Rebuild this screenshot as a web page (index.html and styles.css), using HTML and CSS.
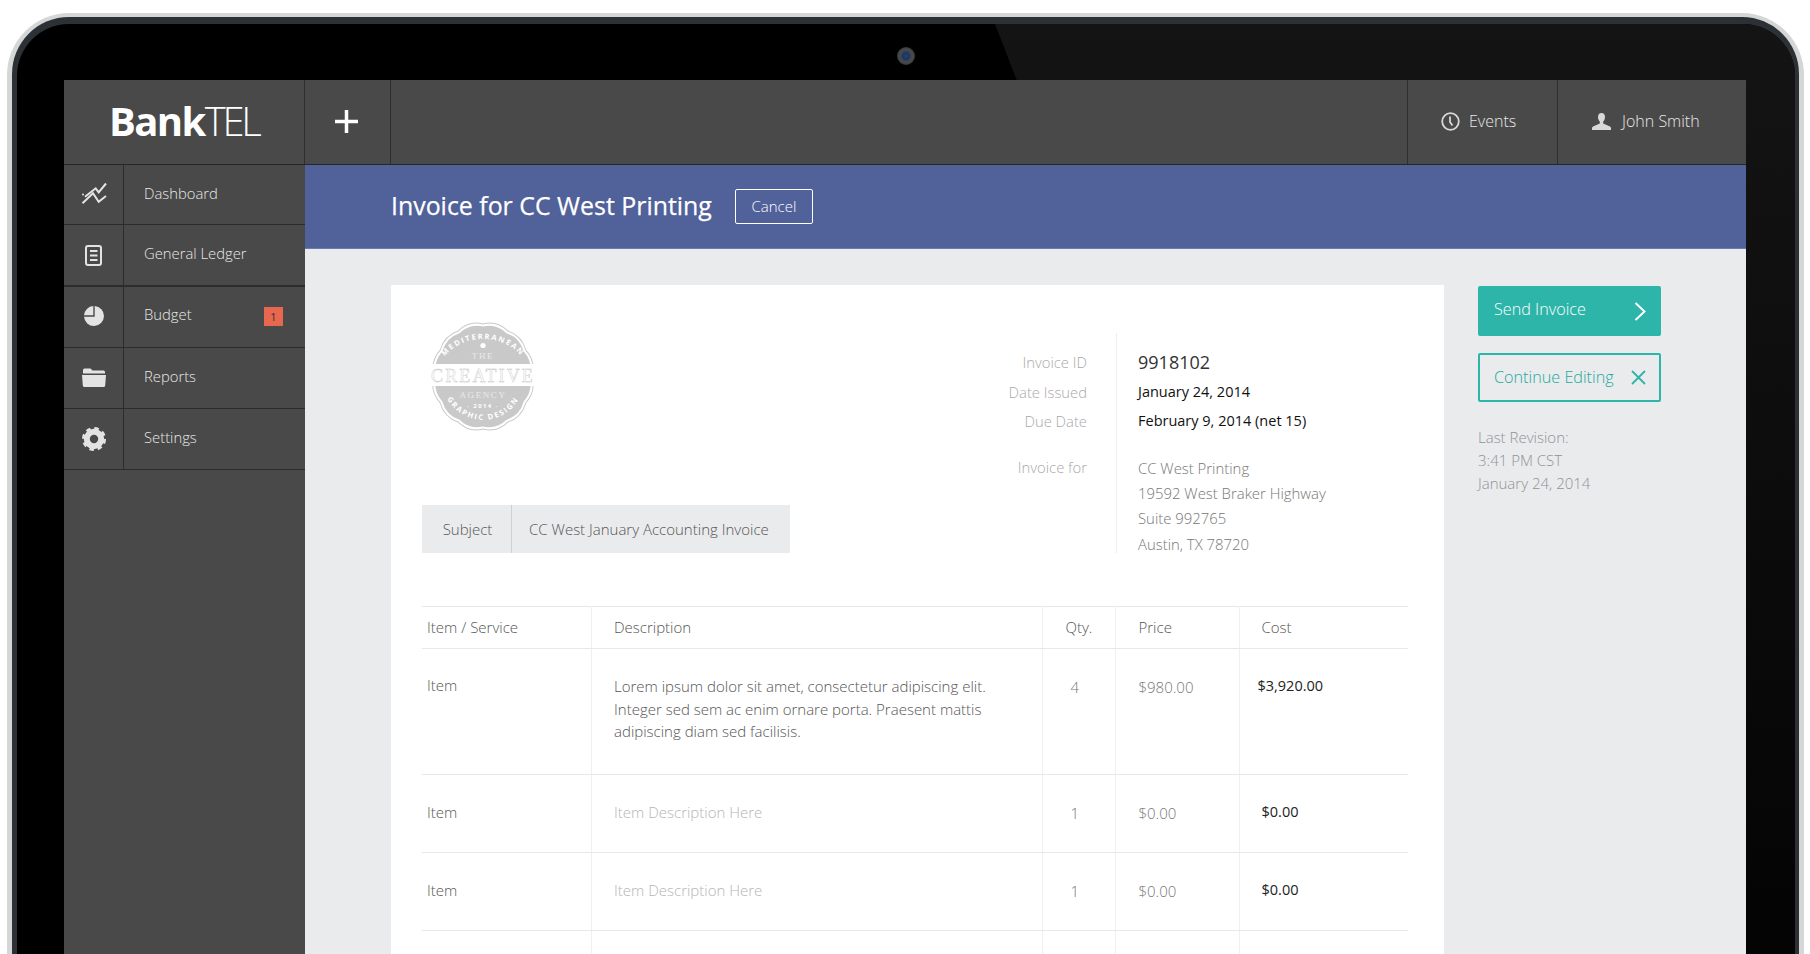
FILE: index.html
```html
<!DOCTYPE html>
<html lang="en">
<head>
<meta charset="utf-8">
<title>BankTEL - Invoice</title>
<link rel="stylesheet" href="styles.css">
</head>
<body>
<div class="device">
  <div class="rim">
    <div class="bezel">
      <div class="glare"></div>
      <div class="camera"></div>
      <div class="screen">
        <header class="topbar">
          <div class="logo"><b>Bank</b><span>TEL</span></div>
          <div class="add">
            <svg class="plus" viewBox="0 0 23 23"><path d="M11.500 0v23M0 11.500h23"/></svg>
          </div>
          <div class="top-spacer"></div>
          <div class="top-cell events">
            <svg class="ic-clock" viewBox="0 0 19 19"><circle cx="9.500" cy="9.500" r="8.300"/><path d="M9 4.500v5.500l2.500 3.500"/></svg>
            <span>Events</span>
          </div>
          <div class="top-cell user">
            <svg class="ic-user" viewBox="0 0 19 17"><path d="M9.500 0C7 0 6 1.800 6 4c0 2 .8 3.600 1.800 4.600v2L1 13.500C.3 13.900 0 14.500 0 15.200V17h19v-1.800c0-.7-.3-1.300-1-1.700l-6.800-2.900v-2C12.200 7.600 13 6 13 4c0-2.200-1-4-3.500-4z"/></svg>
            <span>John Smith</span>
          </div>
        </header>
        <div class="app">
          <nav class="sidebar">
            <a class="nav-row r1">
              <span class="nav-icon"><svg class="ic-chart" viewBox="0 0 25 21"><path d="M3 13.700 13.700 5.300l3 4L24 .5M.5 20.300 11 10.300l5.700 8.400L24 13"/><circle cx="1" cy="11.500" r="1"/></svg></span>
              <span class="nav-label">Dashboard</span>
            </a>
            <a class="nav-row r2">
              <span class="nav-icon"><svg class="ic-ledger" viewBox="0 0 17 21"><rect x="1" y="1" width="15" height="19" rx="2"/><path d="M5 6h7.500M5 10.500h7.500M5 15h7.500"/></svg></span>
              <span class="nav-label">General Ledger</span>
            </a>
            <a class="nav-row r3">
              <span class="nav-icon"><svg class="ic-fill ic-pie" viewBox="0 0 20 20"><path d="M10.700 0A10 10 0 1 1 0 10.700h10.700zM9.300 0v9.300H0A10 10 0 0 1 9.300 0z"/></svg></span>
              <span class="nav-label">Budget</span>
              <span class="badge">1</span>
            </a>
            <a class="nav-row r4">
              <span class="nav-icon"><svg class="ic-fill ic-folder" viewBox="0 0 24 19"><path d="M1 5.500V2Q1 .5 2.500 .5H8.500L10.500 2.500H21.500Q23 2.500 23 4V5.500zM0 7H24L23.200 17.500Q23 19 21.500 19H2.500Q1 19 .8 17.500z"/></svg></span>
              <span class="nav-label">Reports</span>
            </a>
            <a class="nav-row r5">
              <span class="nav-icon"><svg class="ic-gear" viewBox="0 0 24 24"><circle class="ring" cx="12" cy="12" r="7.200"/><circle class="teeth" cx="12" cy="12" r="10.500"/></svg></span>
              <span class="nav-label">Settings</span>
            </a>
          </nav>
          <main class="main">
            <div class="title-bar">
              <h1>Invoice for CC West Printing</h1>
              <button class="cancel">Cancel</button>
            </div>
            <div class="content">
              <section class="card">
                <div class="card-top">
                  <div class="brand">
                    <svg class="stamp" viewBox="0 0 110 112">
                      <defs>
                        <path id="arc-top" d="M10 55A45 37 0 0 1 100 55"/>
                        <path id="arc-bottom" d="M13 55A42 44 0 0 0 97 55"/>
                      </defs>
                      <g transform="translate(55 55.500) scale(.97 1.030) rotate(15) translate(-60 -60)">
                        <path class="stamp-line" d="M73.200 10.700A28 28 0 0 1 96.100 23.900A28 28 0 0 1 109.300 46.800A28 28 0 0 1 109.300 73.200A28 28 0 0 1 96.100 96.100A28 28 0 0 1 73.200 109.300A28 28 0 0 1 46.800 109.300A28 28 0 0 1 23.900 96.100A28 28 0 0 1 10.700 73.200A28 28 0 0 1 10.700 46.800A28 28 0 0 1 23.900 23.900A28 28 0 0 1 46.800 10.700A28 28 0 0 1 73.200 10.700Z"/>
                        <path class="stamp-fill" transform="translate(60 60) scale(.95) translate(-60 -60)" d="M73.200 10.700A28 28 0 0 1 96.100 23.900A28 28 0 0 1 109.300 46.800A28 28 0 0 1 109.300 73.200A28 28 0 0 1 96.100 96.100A28 28 0 0 1 73.200 109.300A28 28 0 0 1 46.800 109.300A28 28 0 0 1 23.900 96.100A28 28 0 0 1 10.700 73.200A28 28 0 0 1 10.700 46.800A28 28 0 0 1 23.900 23.900A28 28 0 0 1 46.800 10.700A28 28 0 0 1 73.200 10.700Z"/>
                      </g>
                      <rect class="stamp-band" x="0" y="43" width="110" height="22"/>
                      <text class="stamp-curve"><textPath href="#arc-top" startOffset="50%">MEDITERRANEAN</textPath></text>
                      <text class="stamp-curve"><textPath href="#arc-bottom" startOffset="50%">GRAPHIC DESIGN</textPath></text>
                      <circle class="stamp-dot" cx="55" cy="24.500" r="2.600"/>
                      <text class="stamp-serif" x="55" y="38">THE</text>
                      <text class="stamp-big" x="55" y="60.500">CREATIVE</text>
                      <text class="stamp-serif" x="55" y="77">AGENCY</text>
                      <text class="stamp-year" x="55" y="86.500">· 2014 ·</text>
                    </svg>
                  </div>
                  <div class="subject">
                    <span class="subject-key">Subject</span>
                    <span class="subject-val">CC West January Accounting Invoice</span>
                  </div>
                  <dl class="info">
                    <dt class="row-a">Invoice ID</dt><dd class="row-a id">9918102</dd>
                    <dt class="row-b">Date Issued</dt><dd class="row-b dark">January 24, 2014</dd>
                    <dt class="row-c">Due Date</dt><dd class="row-c dark">February 9, 2014 (net 15)</dd>
                    <dt class="row-d">Invoice for</dt>
                    <dd class="row-d addr">
                      <span>CC West Printing</span>
                      <span>19592 West Braker Highway</span>
                      <span>Suite 992765</span>
                      <span class="addr-last">Austin, TX 78720</span>
                    </dd>
                  </dl>
                </div>
                <table class="items">
                  <colgroup><col class="c1"><col class="c2"><col class="c3"><col class="c4"><col class="c5"></colgroup>
                  <thead>
                    <tr><th class="item">Item / Service</th><th class="desc">Description</th><th class="qty">Qty.</th><th class="price">Price</th><th class="cost">Cost</th></tr>
                  </thead>
                  <tbody>
                    <tr class="tall"><td class="item">Item</td><td class="desc">Lorem ipsum dolor sit amet, consectetur adipiscing elit. Integer sed sem ac enim ornare porta. Praesent mattis adipiscing diam sed facilisis.</td><td class="qty">4</td><td class="price">$980.00</td><td class="cost wide">$3,920.00</td></tr>
                    <tr><td class="item">Item</td><td class="desc ph">Item Description Here</td><td class="qty">1</td><td class="price">$0.00</td><td class="cost">$0.00</td></tr>
                    <tr><td class="item">Item</td><td class="desc ph">Item Description Here</td><td class="qty">1</td><td class="price">$0.00</td><td class="cost">$0.00</td></tr>
                    <tr><td class="item"></td><td class="desc"></td><td class="qty"></td><td class="price"></td><td class="cost"></td></tr>
                  </tbody>
                </table>
              </section>
              <aside class="actions">
                <button class="btn send"><span>Send Invoice</span><svg class="ic-chev" viewBox="0 0 12 19"><path d="M1.500 1 10.500 9.500 1.500 18"/></svg></button>
                <button class="btn edit"><span>Continue Editing</span><svg class="ic-x" viewBox="0 0 15 15"><path d="M1 1 14 14M14 1 1 14"/></svg></button>
                <p class="rev">Last Revision:<br>3:41 PM CST<br>January 24, 2014</p>
              </aside>
            </div>
          </main>
        </div>
      </div>
    </div>
  </div>
</div>
</body>
</html>
```

FILE: styles.css
```css
* { box-sizing: border-box; }
html, body { margin: 0; height: 954px; overflow: hidden; background: #fff; }
body { font-family: "Open Sans", "Liberation Sans", sans-serif; font-size: 15px; font-weight: 300; color: #555; }

/* device frame */
.device {
  margin: 13px 0 0 7px;
  width: 1797px;
  height: 1100px;
  border: solid #d5d7d7;
  border-width: 4px 5px 0;
  border-radius: 62px 62px 0 0;
  background: #d5d7d7;
}
.rim {
  height: 100%;
  border: solid #2c3136;
  border-width: 7px 4px 0 5px;
  border-radius: 57px 57px 0 0;
  background: #2c3136;
}
.bezel {
  position: relative;
  height: 100%;
  padding: 56px 49px 0 47px;
  background: #000;
  border-radius: 52px 52px 0 0;
  overflow: hidden;
}
.glare {
  position: absolute;
  inset: 0;
  background: linear-gradient(#141414 0, #0b0b0b 520px, #040404 900px);
  clip-path: polygon(978px 0, 100% 0, 100% 100%, 1400px 100%);
}
.camera {
  position: absolute;
  left: 880px;
  top: 23px;
  width: 18px;
  height: 18px;
  border-radius: 50%;
  background: radial-gradient(circle, #1a4a8a 0, #1d3558 22%, #4a4c50 50%, #38393c 70%, #000 100%);
}
.screen { position: relative; height: 100%; background: #eaebed; }

/* top bar */
.topbar {
  display: flex;
  height: 85px;
  background: #484948;
  border-bottom: 1px solid #262626;
}
.logo {
  width: 241px;
  padding: 14px 0 0 45px;
  border-right: 1px solid #2e2e2e;
  color: #fff;
  font-size: 40px;
  line-height: 54px;
  letter-spacing: -1.600px;
}
.logo b { font-weight: 700; }
.logo span { font-weight: 300; letter-spacing: -3.300px; }
.add {
  display: flex;
  align-items: center;
  justify-content: center;
  width: 86px;
  padding: 0 2px 2px 0;
  border-right: 1px solid #2e2e2e;
}
.plus { width: 23px; height: 23px; fill: none; stroke: #fff; stroke-width: 3.500; }
.top-spacer { flex: 1; }
.top-cell {
  display: flex;
  align-items: center;
  padding-bottom: 2px;
  border-left: 1px solid #2e2e2e;
  color: #e8e8e8;
  font-size: 16px;
}
.events { width: 150px; padding-left: 33px; gap: 9px; }
.user { width: 189px; padding-left: 34px; gap: 11px; }
.ic-clock { width: 19px; height: 19px; fill: none; stroke: #d8d8d8; stroke-width: 1.800; }
.ic-user { width: 19px; height: 17px; fill: #d8d8d8; }

/* sidebar */
.app { display: flex; height: 100%; }
.sidebar { flex: 0 0 241px; background: #484948; height: 100%; }
.nav-row {
  display: flex;
  align-items: stretch;
  height: 61px;
  border-bottom: 1px solid #2c2c2c;
  color: #e8e8e8;
  font-size: 14.800px;
}
.nav-row.r1 { height: 60px; }
.nav-row.r2 { height: 62px; border-bottom-width: 2px; }
.nav-icon {
  display: flex;
  align-items: center;
  justify-content: center;
  flex: 0 0 60px;
  border-right: 1px solid #2c2c2c;
}
.nav-row.r3 .nav-icon, .nav-row.r4 .nav-icon { padding-bottom: 2px; }
.nav-label { flex: 1; padding: 18px 0 0 20px; line-height: 20px; }
.nav-row.r3 .nav-label { padding-top: 17px; }
.ic-chart { width: 25px; height: 21px; margin: 0 0 2px 2px; fill: #e2e3e2; stroke: none; overflow: visible; }
.ic-chart path { fill: none; stroke: #e2e3e2; stroke-width: 2; }
.ic-ledger { width: 17px; height: 21px; fill: none; stroke: #e2e3e2; stroke-width: 2; }
.ic-fill { fill: #e2e3e2; }
.ic-pie { width: 20px; height: 20px; }
.ic-folder { width: 24px; height: 19px; }
.ic-gear { width: 24px; height: 24px; fill: none; stroke: #e2e3e2; }
.ic-gear .ring { stroke-width: 6; }
.ic-gear .teeth { stroke-width: 3; stroke-dasharray: 4.400 3.850; }
.badge {
  align-self: flex-start;
  width: 19px;
  height: 19px;
  margin: 20px 22px 0 0;
  background: #e8674f;
  color: #3a2a26;
  font-size: 11px;
  font-weight: 400;
  line-height: 19px;
  text-align: center;
}

/* main */
.main { flex: 1; min-width: 0; }
.title-bar {
  display: flex;
  align-items: center;
  gap: 23px;
  height: 84px;
  padding: 0 0 3px 86px;
  background: #51619a;
  border-bottom: 1px solid #6d7bad;
}
.title-bar h1 {
  margin: 0;
  color: #fff;
  font-size: 24.900px;
  font-weight: 400;
  -webkit-text-stroke: .25px #fff;
  white-space: nowrap;
}
.cancel {
  width: 78px;
  height: 35px;
  margin-top: 2px;
  padding: 0;
  border: 1px solid #fff;
  border-radius: 2px;
  background: transparent;
  color: #fff;
  font: 300 15px "Open Sans", sans-serif;
}
.content { display: flex; gap: 34px; padding: 36px 85px 0 86px; }
.card {
  flex: 0 0 1053px;
  padding: 0 36px 0 31px;
  background: #fff;
}

/* invoice head */
.card-top {
  display: grid;
  grid-template-columns: 1fr 492px;
  grid-template-rows: 182px auto;
  height: 268px;
}
.brand { grid-column: 1; grid-row: 1; padding: 36px 0 0 6px; }
.stamp { display: block; width: 110px; height: 112px; overflow: visible; }
.stamp-line { fill: none; stroke: #c9c9c9; stroke-width: 1; }
.stamp-fill { fill: #c9c9c9; }
.stamp-band { fill: #fff; }
.stamp-dot { fill: #fff; }
.stamp-curve { fill: #fff; font: 700 7.500px "Open Sans", sans-serif; letter-spacing: 1.700px; text-anchor: middle; }
.stamp-serif { fill: #e9e9e9; font: 9px "Liberation Serif", serif; letter-spacing: 1.600px; text-anchor: middle; }
.stamp-big { fill: #fff; stroke: #c4c4c4; stroke-width: .4; font: 18px "Liberation Serif", serif; letter-spacing: 2.100px; text-anchor: middle; }
.stamp-year { fill: #fff; font: 700 6px "Open Sans", sans-serif; letter-spacing: 1.400px; text-anchor: middle; }
.subject {
  grid-column: 1;
  grid-row: 2;
  align-self: start;
  justify-self: start;
  display: flex;
  height: 48px;
  margin: 38px 0 0;
  background: #eaebed;
  line-height: 48px;
}
.subject-key { width: 90px; padding-left: 2px; border-right: 1px solid #cfd0d2; text-align: center; }
.subject-val { width: 278px; padding-left: 17px; }
.info {
  grid-column: 2;
  grid-row: 1 / 3;
  display: grid;
  grid-template-columns: 200px 292px;
  grid-auto-rows: min-content;
  margin: 48px 0 0;
  color: #a9a9a9;
}
.info dt { padding-right: 29px; font-size: 14.800px; text-align: right; }
.info dd { margin: 0; padding-left: 21px; border-left: 1px solid #eeeeee; }
.row-a { height: 44px; padding-top: 14px; line-height: 30px; }
.row-b { height: 30px; line-height: 30px; }
.row-c { height: 28px; line-height: 28px; }
.row-d { padding-top: 20px; line-height: 24px; }
.info dd.id { font-size: 18px; font-weight: 400; color: #333; }
.info dd.dark { color: #111; font-weight: 400; font-size: 14.500px; }
.info dd.addr { padding-top: 20.500px; color: #777; font-size: 14.900px; }
.addr span { display: block; height: 25.400px; line-height: 25px; }
.addr .addr-last { height: 21px; }

/* table */
.items {
  width: 986px;
  margin-top: 53px;
  border-collapse: collapse;
  table-layout: fixed;
}
.c1 { width: 169px; }
.c2 { width: 451px; }
.c3 { width: 73px; }
.c4 { width: 124px; }
.c5 { width: 169px; }
.items th, .items td {
  padding: 0;
  border: 1px solid #e8e8e8;
  border-left-color: #f0f0f0;
  border-right-color: #f0f0f0;
  font-weight: 300;
  text-align: left;
  vertical-align: top;
}
.items th:first-child, .items td:first-child { border-left: 0; }
.items th:last-child, .items td:last-child { border-right: 0; }
.items thead tr { height: 42px; }
.items tbody tr { height: 78px; }
.items tbody tr.tall { height: 126px; }
.items th { padding-top: 10px; line-height: 20px; }
.items td { padding-top: 26px; line-height: 22.700px; }
.items td.qty, .items td.price { padding-top: 27px; }
.items tr.tall td { padding-top: 26px; }
.items tr.tall td.item { padding-top: 25px; }
.items tr.tall td.qty, .items tr.tall td.price { padding-top: 27px; }
.items .item { padding-left: 5px; }
.items .desc { padding-left: 22.500px; padding-right: 30px; }
.items .qty { padding-left: 23px; }
.items td.qty { padding-left: 28px; }
.items .price { padding-left: 23px; }
.items .cost { padding-left: 22px; color: #222; font-weight: 400; font-size: 14.500px; }
.items thead .cost { color: #555; font-weight: 300; font-size: 15px; }
.items td.qty, .items td.price { color: #777; }
.items .wide { padding-left: 18px; }
.items .ph { color: #b5b5b5; }

/* actions */
.actions { flex: 0 0 183px; padding-top: 1px; }
.btn {
  display: flex;
  align-items: center;
  justify-content: space-between;
  width: 183px;
  border-radius: 2px;
  font: 300 16.200px "Open Sans", sans-serif;
}
.send {
  height: 50px;
  padding: 0 15px 4px 16px;
  border: 0;
  background: #2eb5a9;
  color: #fff;
}
.edit {
  height: 49px;
  margin-top: 17px;
  padding: 0 13px 2px 14px;
  border: 2px solid #2eb5a9;
  background: transparent;
  color: #23a99c;
}
.ic-chev { width: 12px; height: 19px; margin-top: 4px; fill: none; stroke: #fff; stroke-width: 2; }
.ic-x { width: 15px; height: 15px; margin-top: 2px; fill: none; stroke: #2eb5a9; stroke-width: 1.800; }
.rev { margin: 24px 0 0; color: #909294; line-height: 22.800px; }
```
